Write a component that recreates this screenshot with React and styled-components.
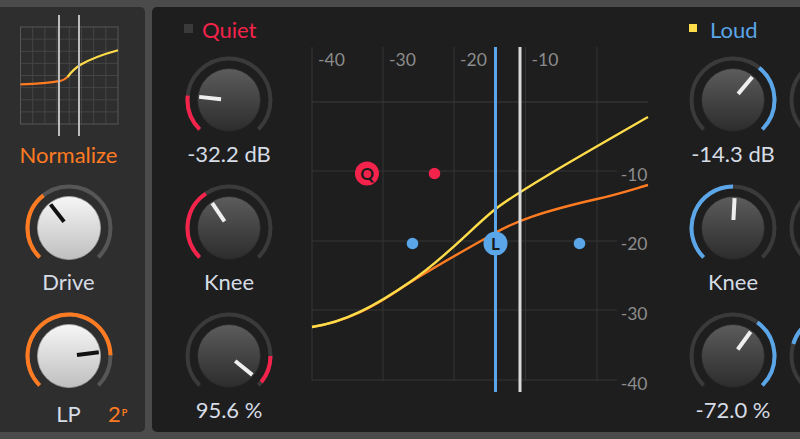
import React from 'react';
import styled, { createGlobalStyle } from 'styled-components';

const RED = '#f4234b';
const BLUE = '#5aa6e8';
const ORANGE = '#ff7b22';
const YELLOW = '#ffdd4a';
const TEXT = '#d6dce5';

const GlobalStyle = createGlobalStyle`
  html, body { margin: 0; padding: 0; background: #4b4b4b; }
  body { font-family: Lato, "Open Sans", sans-serif; overflow: hidden; }
`;

const Frame = styled.div`
  width: 800px;
  height: 439px;
  padding-top: 7px;
  box-sizing: border-box;
  display: flex;
  align-items: flex-start;
  gap: 7px;
  overflow: hidden;
`;

const LeftPanel = styled.div`
  width: 145px;
  height: 425px;
  flex-shrink: 0;
  box-sizing: border-box;
  padding: 8px 8px 0 0;
  background: #2e2e2e;
  border-radius: 0 5px 5px 0;
  display: flex;
  flex-direction: column;
  align-items: center;
`;

const MainPanel = styled.div`
  flex: 1;
  min-width: 0;
  height: 425px;
  box-sizing: border-box;
  padding: 13px 0 0 32px;
  background: #1e1e1e;
  border-radius: 5px 0 0 5px;
  display: flex;
  overflow: hidden;
`;

const Column = styled.div`
  width: 90px;
  flex-shrink: 0;
  margin-left: ${p => p.$ml || 0}px;
  display: flex;
  flex-direction: column;
`;

const Header = styled.div`
  height: 20px;
  margin-bottom: 16px;
  display: flex;
  align-items: center;
  gap: ${p => p.$gap}px;
  padding-left: ${p => p.$pl || 0}px;
`;

const Square = styled.span`
  width: ${p => p.$size}px;
  height: ${p => p.$size}px;
  background: ${p => p.$color};
  margin-top: -4px;
  flex-shrink: 0;
`;

const Title = styled.span`
  font-size: 22px;
  line-height: 20px;
  color: ${p => p.$color};
`;

const Stack = styled.div`
  display: flex;
  flex-direction: column;
  align-items: center;
  gap: 20px;
`;

const Cell = styled.div`
  display: flex;
  flex-direction: column;
  align-items: center;
  position: relative;
  width: 88px;
`;

const Label = styled.div`
  font-size: 22px;
  line-height: 20px;
  height: 20px;
  padding-top: ${p => p.$pt || 0}px;
  color: ${p => p.$color || TEXT};
  white-space: nowrap;
`;

const Normalize = styled(Label)`
  margin-top: 8px;
  margin-bottom: 19px;
`;

const PolesBadge = styled.div`
  position: absolute;
  left: 83.5px;
  top: 92px;
  font-size: 22px;
  line-height: 20px;
  color: ${ORANGE};
  white-space: nowrap;
  sup {
    font-size: 9px;
    font-weight: 700;
    vertical-align: top;
    position: relative;
    top: -1px;
    margin-left: 1px;
  }
`;

const KnobSvg = styled.svg`
  display: block;
  flex-shrink: 0;
`;

const GraphSvg = styled.svg`
  display: block;
  flex-shrink: 0;
  margin-left: 26px;
  margin-top: -13px;
`;

const MiniSvg = styled.svg`
  display: block;
`;

const polar = (cx, cy, r, a) => {
  const rad = (a * Math.PI) / 180;
  return [cx + r * Math.sin(rad), cy - r * Math.cos(rad)];
};

const arc = (cx, cy, r, a0, a1) => {
  const [x0, y0] = polar(cx, cy, r, a0);
  const [x1, y1] = polar(cx, cy, r, a1);
  const large = a1 - a0 > 180 ? 1 : 0;
  return `M${x0.toFixed(2)} ${y0.toFixed(2)} A${r} ${r} 0 ${large} 1 ${x1.toFixed(2)} ${y1.toFixed(2)}`;
};

function Knob({ light, color, from, to, angle }) {
  const rid = React.useId().replace(/[^a-zA-Z0-9]/g, '');
  const gid = `kg${rid}`;
  const track = light ? '#565656' : '#3a3a3a';
  const [px0, py0] = polar(44, 44, 8, angle);
  const [px1, py1] = polar(44, 44, 30, angle);
  return (
    <KnobSvg width="88" height="88" viewBox="0 0 88 88">
      <defs>
        <linearGradient id={gid} x1="0" y1="0" x2="0" y2="1">
          {light ? (
            <>
              <stop offset="0" stopColor="#f6f6f6" />
              <stop offset="1" stopColor="#bfbfbf" />
            </>
          ) : (
            <>
              <stop offset="0" stopColor="#5c5c5c" />
              <stop offset="1" stopColor="#2c2c2c" />
            </>
          )}
        </linearGradient>
      </defs>
      <path d={arc(44, 44, 41.5, -135, 135)} stroke={track} strokeWidth="4" fill="none" />
      {from !== undefined && (
        <path d={arc(44, 44, 41.5, from, to)} stroke={color} strokeWidth="4" fill="none" />
      )}
      <circle cx="44" cy="44" r="31.5" fill={`url(#${gid})`} stroke={light ? '#a8a8a8' : '#262626'} strokeWidth="0.8" />
      <line x1={px0} y1={py0} x2={px1} y2={py1} stroke={light ? '#111' : '#efefef'} strokeWidth="4" />
    </KnobSvg>
  );
}

const YELLOW_PATH =
  'M312 327 C345 322, 375 306, 410 282 C445 258, 470 230, 493 211 C515 193, 580 156, 648 117';
const ORANGE_PATH =
  'M312 327 C345 322, 372 308, 400 289 C425 272, 465 250, 495 233 C515 221.6, 540 212, 597 199 C620 193.7, 635 188.7, 648 185';

const AXIS = '#8c8c8c';
const GRID = '#343434';

function Graph() {
  const verticals = [312, 383, 454, 525.5, 597];
  const hLabels = [
    { y: 171, t: '-10', by: 181 },
    { y: 241, t: '-20', by: 250 },
    { y: 310, t: '-30', by: 320 },
    { y: 380, t: '-40', by: 390 },
  ];
  const top = ['-40', '-30', '-20', '-10'];
  return (
    <GraphSvg width="360" height="425" viewBox="300 7 360 425">
      {verticals.map(x => (
        <line key={x} x1={x} y1="47" x2={x} y2="380.5" stroke={GRID} strokeWidth="1" />
      ))}
      <line x1="312" y1="102" x2="648" y2="102" stroke="#3a3a3a" strokeWidth="1" />
      {hLabels.map(h => (
        <line key={h.y} x1="312" y1={h.y} x2="617" y2={h.y} stroke={GRID} strokeWidth="1" />
      ))}
      {top.map((t, i) => (
        <text key={t} x={verticals[i] + 6} y="65.5" fill={AXIS} fontSize="17.5" fontFamily="Lato, sans-serif">{t}</text>
      ))}
      {hLabels.map(h => (
        <text key={h.t} x="647.5" y={h.by} fill={AXIS} fontSize="17.5" textAnchor="end" fontFamily="Lato, sans-serif">{h.t}</text>
      ))}
      <path d={ORANGE_PATH} stroke={ORANGE} strokeWidth="2.4" fill="none" />
      <path d={YELLOW_PATH} stroke={YELLOW} strokeWidth="2.4" fill="none" />
      <line x1="495.5" y1="47" x2="495.5" y2="392" stroke={BLUE} strokeWidth="3" />
      <line x1="520" y1="47" x2="520" y2="392" stroke="#d9d9d9" strokeWidth="3" />
      <circle cx="367" cy="173.5" r="12" fill={RED} />
      <text x="367" y="179.5" textAnchor="middle" fontSize="17" fontWeight="700" fill="#1a1a1a" fontFamily="Lato, sans-serif">Q</text>
      <circle cx="434.5" cy="173.5" r="5.8" fill={RED} />
      <circle cx="412.5" cy="243.5" r="5.8" fill={BLUE} />
      <circle cx="579.5" cy="243.5" r="5.8" fill={BLUE} />
      <circle cx="495.5" cy="243.5" r="12" fill={BLUE} />
      <text x="495.5" y="249.5" textAnchor="middle" fontSize="17" fontWeight="700" fill="#1a1a1a" fontFamily="Lato, sans-serif">L</text>
    </GraphSvg>
  );
}

function MiniGraph() {
  const step = 97.5 / 8;
  const vs = Array.from({ length: 7 }, (_, i) => 20 + step * (i + 1));
  const hs = Array.from({ length: 7 }, (_, i) => 27 + (97 / 8) * (i + 1));
  return (
    <MiniSvg width="100" height="122" viewBox="18.5 15 100 122">
      {vs.map(x => (
        <line key={x} x1={x} y1="27" x2={x} y2="124" stroke="#454545" strokeWidth="1" />
      ))}
      {hs.map(y => (
        <line key={y} x1="20" y1={y} x2="117.5" y2={y} stroke="#454545" strokeWidth="1" />
      ))}
      <rect x="20" y="27" width="97.5" height="97" fill="none" stroke="#575757" strokeWidth="1" />
      <path d="M20 84.3 C 35 83.8, 50 82.6, 60 80.8 C 63 80.2, 65 79, 67 77" stroke={ORANGE} strokeWidth="2.2" fill="none" />
      <path d="M67 77 C 70 73, 74 68.5, 80 64.8 C 90 59, 104 54, 117.5 50.3" stroke={YELLOW} strokeWidth="2.2" fill="none" />
      <line x1="58.5" y1="15" x2="58.5" y2="136" stroke="#bdbdbd" strokeWidth="2" />
      <line x1="78.5" y1="15" x2="78.5" y2="136" stroke="#bdbdbd" strokeWidth="2" />
    </MiniSvg>
  );
}

function KnobColumn({ ml, title, titleColor, squareColor, squareSize, gap, pl, knobs, color }) {
  return (
    <Column $ml={ml}>
      <Header $gap={gap} $pl={pl}>
        {title && <Square $size={squareSize} $color={squareColor} />}
        {title && <Title $color={titleColor}>{title}</Title>}
      </Header>
      <Stack>
        {knobs.map((k, i) => (
          <Cell key={i}>
            <Knob color={color} from={k.from} to={k.to} angle={k.angle} />
            <Label>{k.label}</Label>
          </Cell>
        ))}
      </Stack>
    </Column>
  );
}

export default function App() {
  return (
    <>
      <GlobalStyle />
      <Frame>
        <LeftPanel>
          <MiniGraph />
          <Normalize $color={ORANGE}>Normalize</Normalize>
          <Stack>
            <Cell>
              <Knob light color={ORANGE} from={-135} to={-38} angle={-38} />
              <Label>Drive</Label>
            </Cell>
            <Cell>
              <Knob light color={ORANGE} from={-135} to={89} angle={83} />
              <Label $pt={4}>LP</Label>
              <PolesBadge>2<sup>P</sup></PolesBadge>
            </Cell>
          </Stack>
        </LeftPanel>
        <MainPanel>
          <KnobColumn
            title="Quiet"
            titleColor={RED}
            squareColor="#3a3a3a"
            squareSize={9}
            gap={9}
            color={RED}
            knobs={[
              { from: -135, to: -84, angle: -84, label: '-32.2 dB' },
              { from: -135, to: -34, angle: -34, label: 'Knee' },
              { from: 90, to: 129, angle: 129, label: '95.6 %' },
            ]}
          />
          <Graph />
          <KnobColumn
            ml={28}
            title="Loud"
            titleColor={BLUE}
            squareColor={YELLOW}
            squareSize={8}
            gap={13}
            pl={1}
            color={BLUE}
            knobs={[
              { from: 39, to: 135, angle: 40, label: '-14.3 dB' },
              { from: -135, to: 0, angle: 3, label: 'Knee' },
              { from: 36, to: 135, angle: 36, label: '-72.0 %' },
            ]}
          />
          <KnobColumn
            ml={10}
            color={BLUE}
            knobs={[
              { angle: 20, label: '' },
              { angle: 0, label: '' },
              { from: -73, to: 0, angle: 0, label: '' },
            ]}
          />
        </MainPanel>
      </Frame>
    </>
  );
}
